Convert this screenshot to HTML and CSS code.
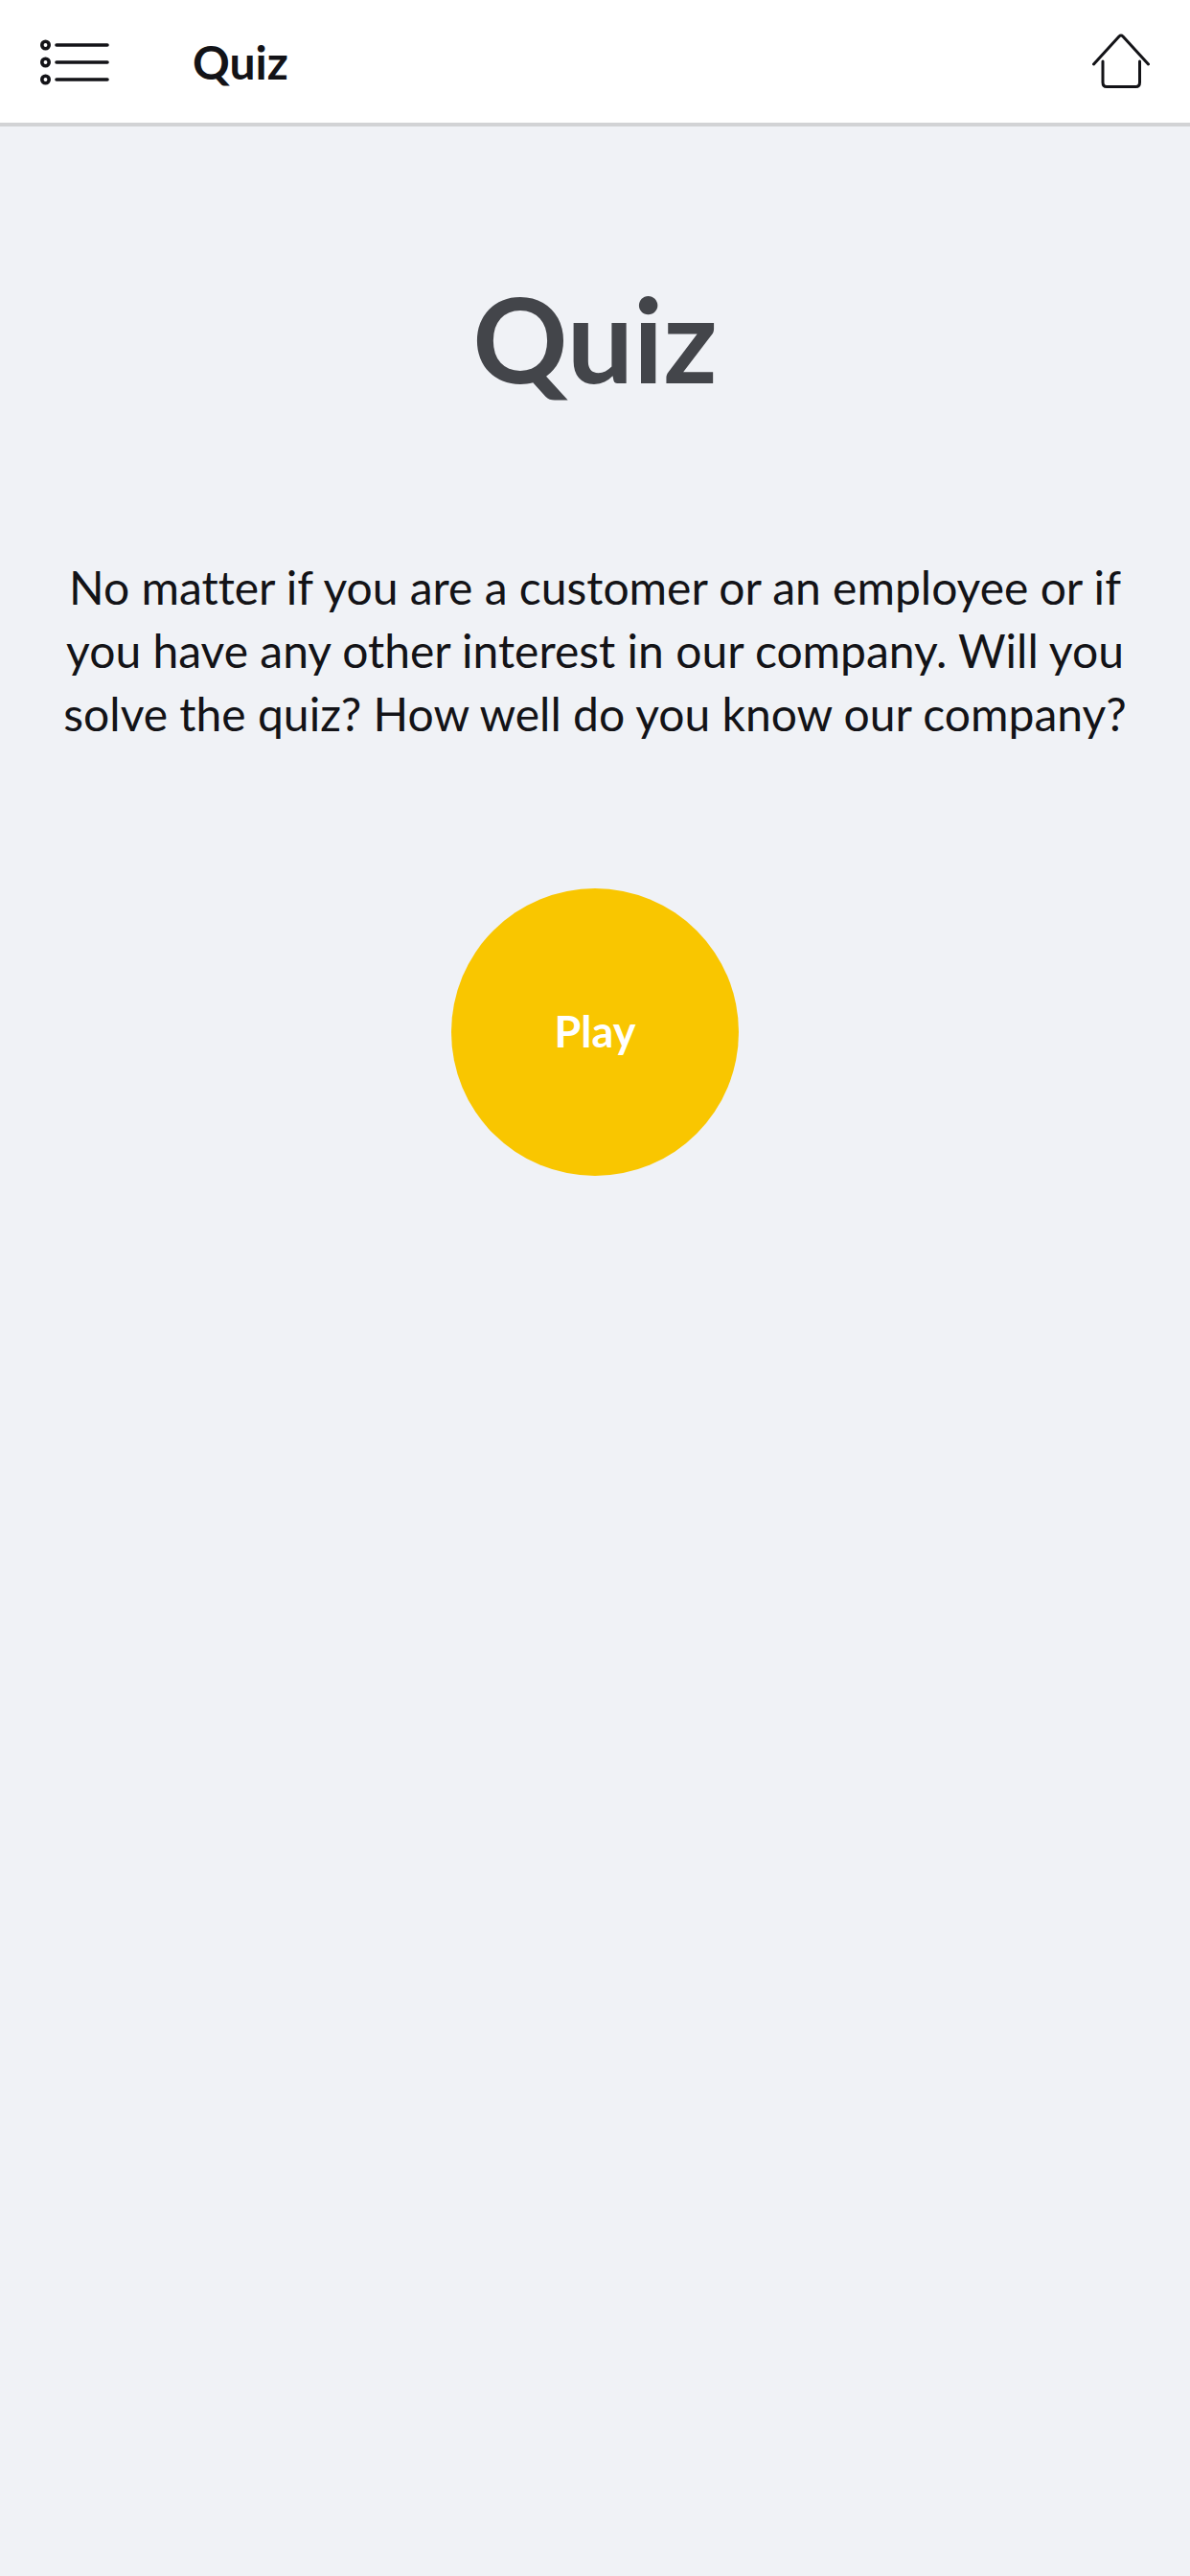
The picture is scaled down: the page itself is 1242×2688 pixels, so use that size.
FILE: index.html
```html
<!DOCTYPE html>
<html lang="en">
<head>
    <meta charset="UTF-8">
    <meta name="viewport" content="width=device-width, initial-scale=1.0">
    <title>Quiz</title>
    <link rel="stylesheet" href="styles.css">
</head>
<body>
    <header class="header">
        <svg class="icon-menu" width="72" height="50" viewBox="0 0 72 50" fill="none" stroke="#131317">
            <circle cx="5.5" cy="8" r="3.7" stroke-width="3.6"/>
            <circle cx="5.5" cy="26" r="3.7" stroke-width="3.6"/>
            <circle cx="5.5" cy="44" r="3.7" stroke-width="3.6"/>
            <path d="M17 8H70M17 26H70M17 44H70" stroke-width="3.6" stroke-linecap="round"/>
        </svg>
        <span class="header-title">Quiz</span>
        <svg class="icon-home" width="60" height="60" viewBox="0 0 60 60" fill="none" stroke="#131317" stroke-width="3" stroke-linecap="round" stroke-linejoin="round">
            <path d="M1.5 33L28 4Q30 2 32 4L58.5 33"/>
            <path d="M11 30V52Q11 56.5 15 56.5H45.5Q49.5 56.5 49.5 52V30"/>
        </svg>
    </header>
    <main class="main">
        <h1 class="title">Quiz</h1>
        <p class="intro">No matter if you are a customer or an employee or if you have any other interest in our company. Will you solve the quiz? How well do you know our company?</p>
        <a class="play">Play</a>
    </main>
</body>
</html>
```

FILE: styles.css
```css
*,*::before,*::after{
    padding: 0;
    margin: 0;
    box-sizing: border-box;
}
body{
    height: 100vh;
    display: flex;
    flex-direction: column;
    background-color: #f0f2f6;
    font-family: "Lato", "Liberation Sans", sans-serif;
    color: #131317;
}
.header{
    height: 132px;
    background-color: #fff;
    border-bottom: 4px solid #d2d3d5;
    padding: 0 42px;
    display: flex;
    align-items: center;
}
.icon-menu{
    margin-right: 87px;
}
.header-title{
    flex: 1;
    font-size: 48px;
    font-weight: 700;
}
.main{
    flex: 1;
    display: flex;
    flex-direction: column;
    align-items: center;
}
.title{
    margin-top: 144px;
    font-size: 123px;
    line-height: 154px;
    font-weight: 700;
    color: #43454a;
}
.intro{
    margin-top: 150px;
    width: 1150px;
    font-size: 48px;
    line-height: 66px;
    text-align: center;
    font-variant-ligatures: none;
}
.play{
    margin-top: 149px;
    width: 300px;
    height: 300px;
    padding-bottom: 3px;
    border-radius: 50%;
    background-color: #f9c600;
    color: #fff;
    font-size: 45px;
    font-weight: 700;
    display: flex;
    justify-content: center;
    align-items: center;
}
```
